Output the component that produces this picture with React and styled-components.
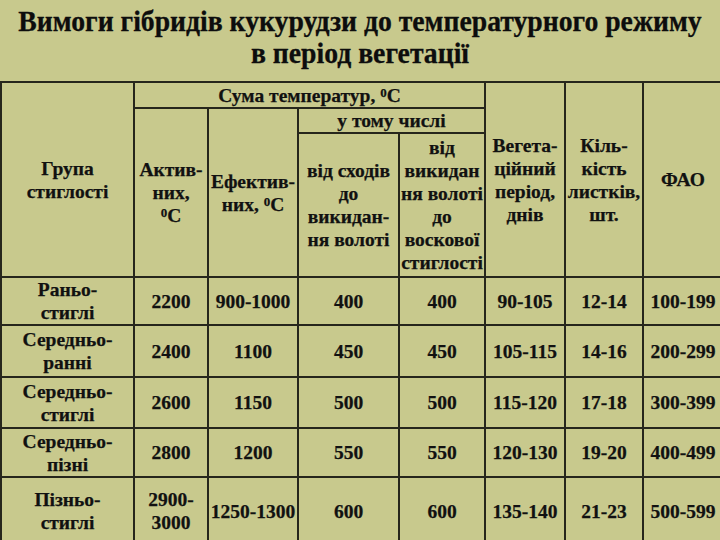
import React from "react";
import styled, { createGlobalStyle } from "styled-components";

const Global = createGlobalStyle`
  html, body {
    margin: 0;
    padding: 0;
    background: #c8c98d;
    overflow: hidden;
  }
  body {
    width: 720px;
    height: 540px;
    font-family: "Liberation Serif", "Times New Roman", serif;
    color: #111;
  }
`;

const Page = styled.div`
  width: 720px;
  height: 540px;
  overflow: hidden;
  background: #c8c98d;
  font-family: "Liberation Serif", "Times New Roman", serif;
`;

const Title = styled.h1`
  margin: 0;
  padding: 6px 0 0 0;
  font-family: "Liberation Serif", "Times New Roman", serif;
  font-size: 29px;
  line-height: 31.5px;
  font-weight: bold;
  text-align: center;
  color: #0d0d0d;
  white-space: nowrap;
  transform: scaleX(0.955);
  transform-origin: 50% 0;
  -webkit-text-stroke: 0.3px #0d0d0d;
`;

const Table = styled.table`
  margin-top: 12px;
  border-collapse: collapse;
  table-layout: fixed;
  width: 722px;
  font-family: "Liberation Serif", "Times New Roman", serif;
  font-size: 19.5px;
  line-height: 23px;
  font-weight: bold;
  color: #111;
`;

const Row = styled.tr`
  height: ${(p) => p.$h}px;
`;

const Cell = styled.td`
  border: 2px solid #26261c;
  padding: 0;
  font-family: "Liberation Serif", "Times New Roman", serif;
  font-size: 19.5px;
  font-weight: bold;
  color: #111;
  text-align: center;
  vertical-align: middle;
  white-space: nowrap;
  overflow: hidden;
  -webkit-text-stroke: 0.25px #111;
`;

const Sup = styled.sup`
  font-size: 13px;
  vertical-align: top;
  position: relative;
  top: -3px;
`;

const widths = [133, 74, 90, 101, 86, 80, 78, 80];

const rows = [
  ["Раньо-|стиглі", "2200", "900-1000", "400", "400", "90-105", "12-14", "100-199", 48],
  ["Середньо-|ранні", "2400", "1100", "450", "450", "105-115", "14-16", "200-299", 52],
  ["Середньо-|стиглі", "2600", "1150", "500", "500", "115-120", "17-18", "300-399", 51],
  ["Середньо-|пізні", "2800", "1200", "550", "550", "120-130", "19-20", "400-499", 49],
  ["Пізньо-|стиглі", "2900-|3000", "1250-1300", "600", "600", "135-140", "21-23", "500-599", 68],
];

const Lines = ({ text }) =>
  text.split("|").map((t, i, a) => (
    <React.Fragment key={i}>
      {t}
      {i < a.length - 1 && <br />}
    </React.Fragment>
  ));

export default function App() {
  return (
    <Page>
      <Global />
      <Title>
        Вимоги гібридів кукурудзи до температурного режиму
        <br />в період вегетації
      </Title>
      <Table>
        <colgroup>
          {widths.map((w, i) => (
            <col key={i} style={{ width: w }} />
          ))}
        </colgroup>
        <thead>
          <Row $h={26}>
            <Cell as="th" rowSpan={3}>
              Група
              <br />
              стиглості
            </Cell>
            <Cell as="th" colSpan={4}>
              Сума температур, <Sup>0</Sup>С
            </Cell>
            <Cell as="th" rowSpan={3}>
              Вегета-
              <br />
              ційний
              <br />
              період,
              <br />
              днів
            </Cell>
            <Cell as="th" rowSpan={3}>
              Кіль-
              <br />
              кість
              <br />
              листків,
              <br />
              шт.
            </Cell>
            <Cell as="th" rowSpan={3}>
              ФАО
            </Cell>
          </Row>
          <Row $h={25}>
            <Cell as="th" rowSpan={2}>
              Актив-
              <br />
              них,
              <br />
              <Sup>0</Sup>С
            </Cell>
            <Cell as="th" rowSpan={2}>
              Ефектив-
              <br />
              них, <Sup>0</Sup>С
            </Cell>
            <Cell as="th" colSpan={2}>
              у тому числі
            </Cell>
          </Row>
          <Row $h={144}>
            <Cell as="th">
              від сходів
              <br />
              до
              <br />
              викидан-
              <br />
              ня волоті
            </Cell>
            <Cell as="th">
              від
              <br />
              викидан
              <br />
              ня волоті
              <br />
              до
              <br />
              воскової
              <br />
              стиглості
            </Cell>
          </Row>
        </thead>
        <tbody>
          {rows.map((r, i) => (
            <Row key={i} $h={r[8]}>
              {r.slice(0, 8).map((c, j) => (
                <Cell key={j}>
                  <Lines text={c} />
                </Cell>
              ))}
            </Row>
          ))}
        </tbody>
      </Table>
    </Page>
  );
}
